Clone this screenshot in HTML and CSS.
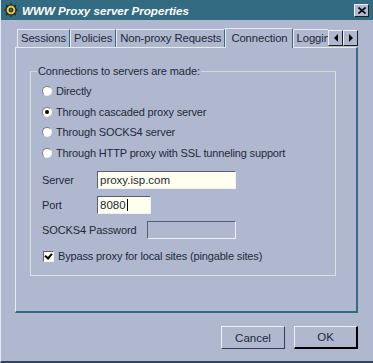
FILE: index.html
```html
<!DOCTYPE html>
<html lang="en">
<head>
    <meta charset="UTF-8">
    <title>WWW Proxy server Properties</title>
    <link rel="stylesheet" href="styles.css">
</head>
<body>
    <div class="window">
        <div class="titlebar">
            <svg class="app-icon" width="14" height="14" viewBox="0 0 14 14">
                <circle cx="7" cy="7" r="5" fill="#e8d040" stroke="#222" stroke-width="1.2"/>
                <circle cx="7" cy="7" r="2" fill="#2e6a80" stroke="#222" stroke-width="1"/>
                <path d="M7 0v2M7 12v2M0 7h2M12 7h2M2 2l1.5 1.5M10.5 10.5L12 12M2 12l1.5-1.5M10.5 3.5L12 2" stroke="#222" stroke-width="1.2"/>
            </svg>
            <span class="title">WWW Proxy server Properties</span>
            <span class="close-btn">
                <svg width="8" height="7" viewBox="0 0 8 7"><path d="M0.5 0.5l7 6M7.5 0.5l-7 6" stroke="#000" stroke-width="1.6"/></svg>
            </span>
        </div>

        <div class="content">
            <div class="tabs">
                <div class="tab">Sessions</div>
                <div class="tab">Policies</div>
                <div class="tab">Non-proxy Requests</div>
                <div class="tab active">Connection</div>
                <div class="tab clipped">Logging</div>
                <div class="tab-arrows">
                    <span class="arrow-btn"><span class="tri left"></span></span>
                    <span class="arrow-btn"><span class="tri right"></span></span>
                </div>
            </div>

            <div class="panel">
                <fieldset class="group">
                    <legend>Connections to servers are made:</legend>
                    <div class="option"><span class="radio"></span>Directly</div>
                    <div class="option"><span class="radio checked"></span>Through cascaded proxy server</div>
                    <div class="option"><span class="radio"></span>Through SOCKS4 server</div>
                    <div class="option"><span class="radio"></span>Through HTTP proxy with SSL tunneling support</div>

                    <div class="fields">
                        <div class="field-row">
                            <label class="field-label">Server</label>
                            <span class="textbox wide">proxy.isp.com</span>
                        </div>
                        <div class="field-row">
                            <label class="field-label">Port</label>
                            <span class="textbox short">8080<span class="caret"></span></span>
                        </div>
                        <div class="field-row">
                            <label class="field-label long">SOCKS4 Password</label>
                            <span class="textbox disabled"></span>
                        </div>
                    </div>

                    <div class="option check-row"><span class="checkbox"></span>Bypass proxy for local sites (pingable sites)</div>
                </fieldset>
            </div>

            <div class="buttons">
                <button class="btn">Cancel</button>
                <button class="btn default">OK</button>
            </div>
        </div>
    </div>
</body>
</html>
```

FILE: styles.css
```css
body {
    margin: 0;
    font-family: "Liberation Sans", Arial, sans-serif;
    font-size: 11px;
    color: #1c2a38;
}
.window {
    width: 372px;
    height: 361px;
    background-color: #b0b8d0;
    border-left: 1px solid #e4e8f4;
    border-bottom: 2px solid #34445c;
}
.titlebar {
    height: 20px;
    background-color: #336b82;
    display: flex;
    align-items: center;
    padding: 0 3px 0 3px;
    color: #fff;
}
.app-icon {
    margin-right: 4px;
}
.title {
    font-weight: bold;
    font-style: italic;
    font-size: 11.6px;
    flex: 1;
}
.close-btn {
    width: 13px;
    height: 11px;
    background-color: #b0b8d0;
    border: 1px solid;
    border-color: #eef0f8 #202020 #202020 #eef0f8;
    display: flex;
    align-items: center;
    justify-content: center;
    margin-right: 1px;
}
.content {
    padding: 7px 15px 0 14px;
}
.tabs {
    display: flex;
    align-items: flex-end;
    height: 20px;
    padding-left: 2px;
    position: relative;
    z-index: 1;
}
.tab {
    height: 17px;
    line-height: 17px;
    padding: 0 3px 0 3px;
    border-top: 1px solid #e4ecf0;
    border-left: 1px solid #e4ecf0;
    border-right: 1px solid #336b82;
    font-size: 11.3px;
    letter-spacing: -0.1px;
    white-space: nowrap;
}
.tab.active {
    height: 19px;
    line-height: 18px;
    margin-bottom: -1px;
    padding: 0 4px 0 5px;
    background-color: #b0b8d0;
}
.tab.clipped {
    flex: 1;
    overflow: hidden;
    padding-right: 0;
    border-right: none;
}
.tab-arrows {
    display: flex;
    align-self: center;
    margin-top: 1px;
}
.arrow-btn {
    width: 13px;
    height: 14px;
    background-color: #b0b8d0;
    border: 1px solid;
    border-color: #eef0f8 #202020 #202020 #eef0f8;
    display: flex;
    align-items: center;
    justify-content: center;
}
.tri {
    width: 0;
    height: 0;
    border-top: 4px solid transparent;
    border-bottom: 4px solid transparent;
}
.tri.left {
    border-right: 4px solid #000;
}
.tri.right {
    border-left: 4px solid #000;
}
.panel {
    height: 266px;
    box-sizing: border-box;
    border-top: 1px solid #e4ecf0;
    border-left: 1px solid #e4ecf0;
    border-right: 2px solid #336b82;
    border-bottom: 2px solid #336b82;
    padding: 17px 20px 0 14px;
}
.group {
    margin: 0;
    height: 211px;
    box-sizing: border-box;
    border: 1px solid #d4e4e0;
    border-top-color: #c8dcd8;
    padding: 4px 0 0 11px;
}
.group legend {
    padding: 0 1px;
    margin-left: -5px;
    font-size: 11px;
    letter-spacing: -0.1px;
}
.option {
    display: flex;
    align-items: center;
    height: 20.5px;
    font-size: 11px;
    letter-spacing: -0.15px;
}
.radio {
    width: 8px;
    height: 8px;
    border-radius: 50%;
    background-color: #fffff4;
    border: 1px solid;
    border-color: #70808c #f0f4f8 #f0f4f8 #70808c;
    margin-right: 4px;
    display: flex;
    align-items: center;
    justify-content: center;
}
.radio.checked::after {
    content: "";
    width: 4px;
    height: 4px;
    border-radius: 50%;
    background-color: #000;
}
.fields {
    margin-top: 8px;
    display: flex;
    flex-direction: column;
    gap: 7px;
}
.field-row {
    display: flex;
    align-items: center;
    height: 18px;
}
.field-label {
    width: 55px;
    font-size: 11px;
    letter-spacing: -0.1px;
}
.field-label.long {
    width: 105px;
}
.textbox {
    height: 16px;
    line-height: 16px;
    background-color: #fffff0;
    border: 1px solid;
    border-color: #556070 #eef2f8 #eef2f8 #556070;
    padding: 0 2px;
    font-size: 11.5px;
    display: flex;
    align-items: center;
}
.textbox.wide {
    width: 133px;
}
.textbox.short {
    width: 48px;
}
.textbox.disabled {
    width: 83px;
    background-color: #b0b8d0;
}
.caret {
    width: 1px;
    height: 12px;
    background-color: #000;
    margin-left: 1px;
}
.check-row {
    margin-top: 7px;
}
.checkbox {
    width: 9px;
    height: 9px;
    background-color: #fffff4;
    border: 1px solid;
    border-color: #556070 #eef2f8 #eef2f8 #556070;
    margin: 0 4px 0 1px;
    position: relative;
}
.checkbox::after {
    content: "";
    position: absolute;
    left: 2px;
    top: 0px;
    width: 3px;
    height: 5px;
    border-right: 2px solid #000;
    border-bottom: 2px solid #000;
    transform: rotate(40deg);
}
.buttons {
    display: flex;
    justify-content: flex-end;
    gap: 9px;
    margin-top: 13px;
}
.btn {
    width: 64px;
    height: 23px;
    background-color: #b0b8d0;
    border: 1px solid;
    border-color: #eef0f8 #304050 #304050 #eef0f8;
    font-family: "Liberation Sans", Arial, sans-serif;
    font-size: 11.5px;
    color: #1c2a38;
    padding: 0;
}
.btn.default {
    border-right: 2px solid #000;
    border-bottom: 2px solid #000;
}
```
